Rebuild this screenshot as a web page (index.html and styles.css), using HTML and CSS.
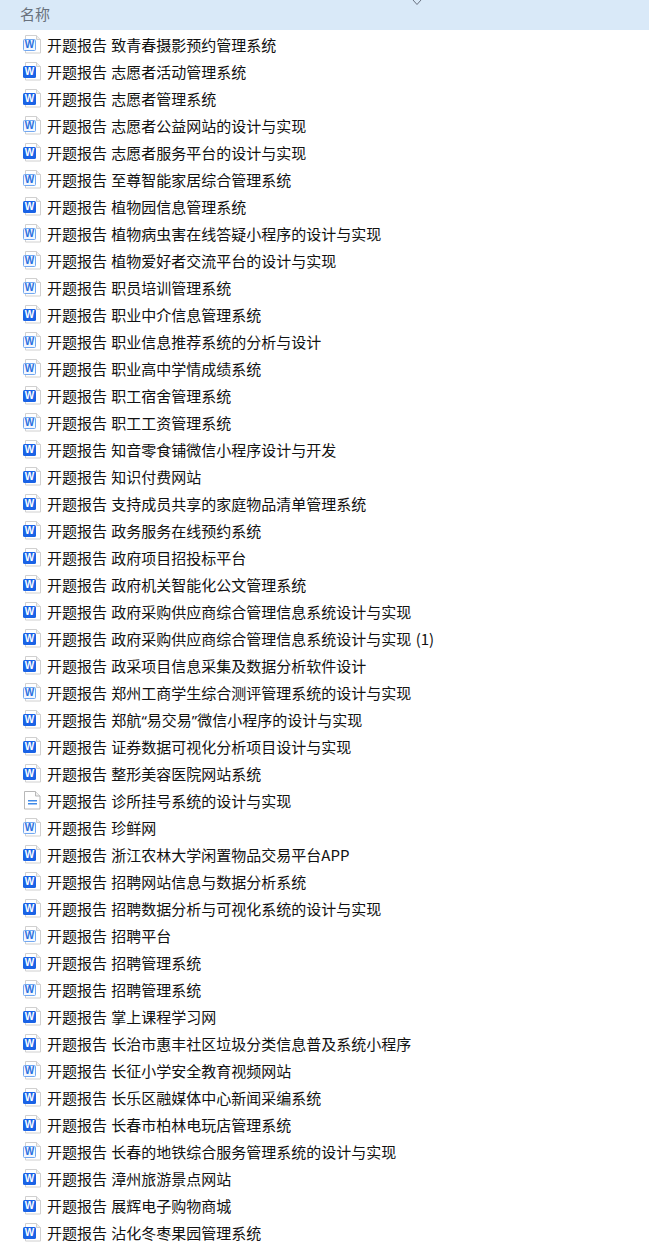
FILE: index.html
```html
<!DOCTYPE html>
<html lang="zh-CN">
<head>
    <meta charset="UTF-8">
    <meta name="viewport" content="width=device-width, initial-scale=1.0">
    <title>文件列表</title>
    <link rel="stylesheet" href="styles.css">
</head>
<body>
    <!-- Icon definitions -->
    <svg class="icon-defs" aria-hidden="true">
        <symbol id="word-light" viewBox="0 0 20 20">
            <path d="M3.5 1.5H14.5L18.5 5.5V19H3.5Z" fill="#fff" stroke="#d0d0d0"/>
            <path d="M14.5 1.5V5.5H18.5" fill="#eee" stroke="#d0d0d0"/>
            <rect x="1.5" y="5.5" width="12" height="11" rx="1" fill="#f2f7ff" stroke="#73a8f0"/>
            <text class="icon-w icon-w-light" x="7.5" y="14.4" text-anchor="middle">W</text>
        </symbol>
        <symbol id="word-dark" viewBox="0 0 20 20">
            <path d="M3.5 1.5H14.5L18.5 5.5V19H3.5Z" fill="#fff" stroke="#d0d0d0"/>
            <path d="M14.5 1.5V5.5H18.5" fill="#eee" stroke="#d0d0d0"/>
            <rect x="1" y="5" width="13" height="12" rx="1.5" fill="#1a63e6"/>
            <text class="icon-w icon-w-dark" x="7.5" y="14.4" text-anchor="middle">W</text>
        </symbol>
        <symbol id="doc" viewBox="0 0 20 20">
            <path d="M2.5 1.5H13.5L18 6V19H2.5Z" fill="#fff" stroke="#b8b8b8"/>
            <path d="M13.5 1.5V6H18" fill="#f1f1f1" stroke="#b8b8b8"/>
            <rect x="6" y="10" width="9" height="1.5" fill="#3f8ae8"/>
            <rect x="6" y="13" width="9" height="1.5" fill="#3f8ae8"/>
        </symbol>
    </svg>

    <div class="list-header">
        <span class="col-name">名称</span>
        <svg class="sort-arrow" width="10" height="6" viewBox="0 0 10 6"><path d="M1 0L5 4.5L9 0" fill="none" stroke="#6a7280"/></svg>
    </div>

    <ul class="file-list">
        <li><svg class="file-icon"><use href="#word-light"/></svg>开题报告 致青春摄影预约管理系统</li>
        <li><svg class="file-icon"><use href="#word-dark"/></svg>开题报告 志愿者活动管理系统</li>
        <li><svg class="file-icon"><use href="#word-dark"/></svg>开题报告 志愿者管理系统</li>
        <li><svg class="file-icon"><use href="#word-light"/></svg>开题报告 志愿者公益网站的设计与实现</li>
        <li><svg class="file-icon"><use href="#word-dark"/></svg>开题报告 志愿者服务平台的设计与实现</li>
        <li><svg class="file-icon"><use href="#word-light"/></svg>开题报告 至尊智能家居综合管理系统</li>
        <li><svg class="file-icon"><use href="#word-dark"/></svg>开题报告 植物园信息管理系统</li>
        <li><svg class="file-icon"><use href="#word-light"/></svg>开题报告 植物病虫害在线答疑小程序的设计与实现</li>
        <li><svg class="file-icon"><use href="#word-light"/></svg>开题报告 植物爱好者交流平台的设计与实现</li>
        <li><svg class="file-icon"><use href="#word-light"/></svg>开题报告 职员培训管理系统</li>
        <li><svg class="file-icon"><use href="#word-dark"/></svg>开题报告 职业中介信息管理系统</li>
        <li><svg class="file-icon"><use href="#word-light"/></svg>开题报告 职业信息推荐系统的分析与设计</li>
        <li><svg class="file-icon"><use href="#word-light"/></svg>开题报告 职业高中学情成绩系统</li>
        <li><svg class="file-icon"><use href="#word-dark"/></svg>开题报告 职工宿舍管理系统</li>
        <li><svg class="file-icon"><use href="#word-light"/></svg>开题报告 职工工资管理系统</li>
        <li><svg class="file-icon"><use href="#word-dark"/></svg>开题报告 知音零食铺微信小程序设计与开发</li>
        <li><svg class="file-icon"><use href="#word-dark"/></svg>开题报告 知识付费网站</li>
        <li><svg class="file-icon"><use href="#word-dark"/></svg>开题报告 支持成员共享的家庭物品清单管理系统</li>
        <li><svg class="file-icon"><use href="#word-dark"/></svg>开题报告 政务服务在线预约系统</li>
        <li><svg class="file-icon"><use href="#word-dark"/></svg>开题报告 政府项目招投标平台</li>
        <li><svg class="file-icon"><use href="#word-dark"/></svg>开题报告 政府机关智能化公文管理系统</li>
        <li><svg class="file-icon"><use href="#word-dark"/></svg>开题报告 政府采购供应商综合管理信息系统设计与实现</li>
        <li><svg class="file-icon"><use href="#word-dark"/></svg>开题报告 政府采购供应商综合管理信息系统设计与实现 (1)</li>
        <li><svg class="file-icon"><use href="#word-dark"/></svg>开题报告 政采项目信息采集及数据分析软件设计</li>
        <li><svg class="file-icon"><use href="#word-light"/></svg>开题报告 郑州工商学生综合测评管理系统的设计与实现</li>
        <li><svg class="file-icon"><use href="#word-dark"/></svg><span>开题报告 郑航<span class="quote">“</span>易交易<span class="quote">”</span>微信小程序的设计与实现</span></li>
        <li><svg class="file-icon"><use href="#word-dark"/></svg>开题报告 证券数据可视化分析项目设计与实现</li>
        <li><svg class="file-icon"><use href="#word-dark"/></svg>开题报告 整形美容医院网站系统</li>
        <li><svg class="file-icon"><use href="#doc"/></svg>开题报告 诊所挂号系统的设计与实现</li>
        <li><svg class="file-icon"><use href="#word-light"/></svg>开题报告 珍鲜网</li>
        <li><svg class="file-icon"><use href="#word-dark"/></svg>开题报告 浙江农林大学闲置物品交易平台APP</li>
        <li><svg class="file-icon"><use href="#word-dark"/></svg>开题报告 招聘网站信息与数据分析系统</li>
        <li><svg class="file-icon"><use href="#word-dark"/></svg>开题报告 招聘数据分析与可视化系统的设计与实现</li>
        <li><svg class="file-icon"><use href="#word-light"/></svg>开题报告 招聘平台</li>
        <li><svg class="file-icon"><use href="#word-dark"/></svg>开题报告 招聘管理系统</li>
        <li><svg class="file-icon"><use href="#word-light"/></svg>开题报告 招聘管理系统</li>
        <li><svg class="file-icon"><use href="#word-dark"/></svg>开题报告 掌上课程学习网</li>
        <li><svg class="file-icon"><use href="#word-dark"/></svg>开题报告 长治市惠丰社区垃圾分类信息普及系统小程序</li>
        <li><svg class="file-icon"><use href="#word-light"/></svg>开题报告 长征小学安全教育视频网站</li>
        <li><svg class="file-icon"><use href="#word-dark"/></svg>开题报告 长乐区融媒体中心新闻采编系统</li>
        <li><svg class="file-icon"><use href="#word-dark"/></svg>开题报告 长春市柏林电玩店管理系统</li>
        <li><svg class="file-icon"><use href="#word-light"/></svg>开题报告 长春的地铁综合服务管理系统的设计与实现</li>
        <li><svg class="file-icon"><use href="#word-dark"/></svg>开题报告 漳州旅游景点网站</li>
        <li><svg class="file-icon"><use href="#word-dark"/></svg>开题报告 展辉电子购物商城</li>
        <li><svg class="file-icon"><use href="#word-dark"/></svg>开题报告 沾化冬枣果园管理系统</li>
    </ul>
</body>
</html>
```

FILE: styles.css
```css
/* File list */
html, body { height: 1244px; overflow: hidden; }
body { font-family: "Noto Sans CJK SC", "Liberation Sans", sans-serif; background-color: #fff; color: #111; margin: 0; padding: 0; }
.icon-defs { display: none; }
.icon-w { font-family: "Liberation Sans", sans-serif; font-size: 10px; font-weight: bold; }
.icon-w-light { fill: #2a6fe0; }
.icon-w-dark { fill: #fff; }
.list-header { position: relative; height: 30px; box-sizing: border-box; padding: 0 0 3px 20px; background-color: #d9e9f8; display: flex; align-items: center; }
.col-name { font-size: 15px; color: #68717c; }
.sort-arrow { position: absolute; left: 412px; top: 0; }
.file-list { list-style: none; margin: 0; padding: 1px 0 0 22px; }
.file-list li { display: flex; align-items: center; height: 27px; font-size: 15px; line-height: 27px; white-space: pre; word-spacing: 1px; }
.file-icon { width: 20px; height: 20px; margin: 0 5px 1px 0; flex-shrink: 0; }
.quote { font-family: "Noto Sans", sans-serif; }
```
